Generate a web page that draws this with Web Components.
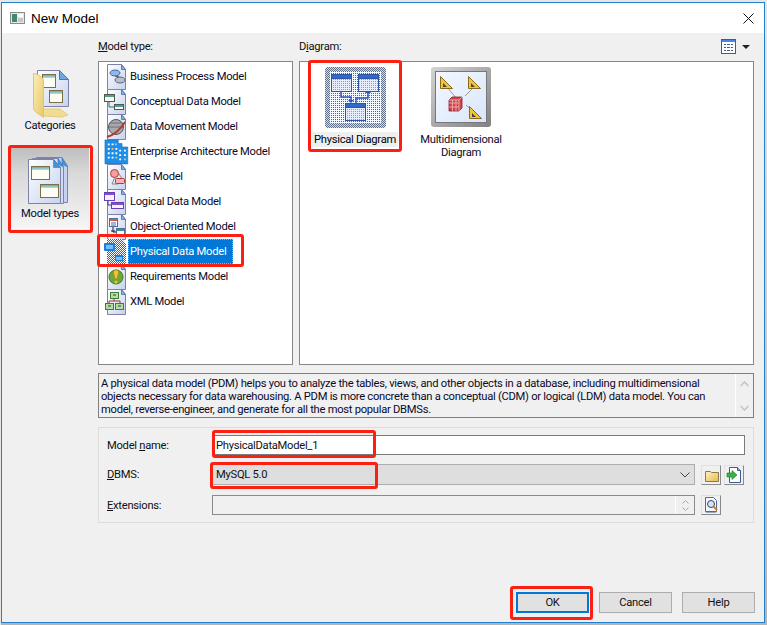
<!DOCTYPE html>
<html>
<head>
<meta charset="utf-8">
<title>New Model</title>
<style>
  html, body { margin: 0; padding: 0; }
  body { width: 767px; height: 625px; overflow: hidden; background: #f0f0f0; font-family: Roboto, "Liberation Sans", Arial, sans-serif; font-size: 11.2px; letter-spacing: -.27px; color: #000; }
  u { text-decoration: underline; }
</style>
</head>
<body>
<nm-dialog heading="New Model">
  <nm-side-pane slot="side">
    <nm-side-item icon="categories">Categories</nm-side-item>
    <nm-side-item icon="types" active>Model types</nm-side-item>
  </nm-side-pane>

  <nm-pane slot="types" style="width:195px"><span slot="label"><u>M</u>odel type:</span>
    <nm-list-row icon="business">Business Process Model</nm-list-row>
    <nm-list-row icon="conceptual">Conceptual Data Model</nm-list-row>
    <nm-list-row icon="movement">Data Movement Model</nm-list-row>
    <nm-list-row icon="enterprise">Enterprise Architecture Model</nm-list-row>
    <nm-list-row icon="free">Free Model</nm-list-row>
    <nm-list-row icon="logical">Logical Data Model</nm-list-row>
    <nm-list-row icon="oo">Object-Oriented Model</nm-list-row>
    <nm-list-row icon="physical" selected>Physical Data Model</nm-list-row>
    <nm-list-row icon="requirements">Requirements Model</nm-list-row>
    <nm-list-row icon="xml">XML Model</nm-list-row>
  </nm-pane>

  <nm-pane slot="diagrams" style="flex:1" tiles><span slot="label">D<u>i</u>agram:</span><nm-view-switch slot="tools"></nm-view-switch>
    <nm-tile icon="phys" selected>Physical Diagram</nm-tile>
    <nm-tile icon="multi">Multidimensional Diagram</nm-tile>
  </nm-pane>

  <nm-description slot="description">A physical data model (PDM) helps you to analyze the tables, views, and other objects in a database, including multidimensional<br>objects necessary for data warehousing. A PDM is more concrete than a conceptual (CDM) or logical (LDM) data model. You can<br>model, reverse-engineer, and generate for all the most popular DBMSs.</nm-description>

  <nm-form slot="form">
    <nm-field><span slot="label">Model <u>n</u>ame:</span><nm-input value="PhysicalDataModel_1"></nm-input></nm-field>
    <nm-field style="height:21px;margin-bottom:1px"><span slot="label"><u>D</u>BMS:</span><nm-input kind="combo" value="MySQL 5.0"></nm-input><nm-tool icon="folder"></nm-tool><nm-tool icon="import" style="margin:0 1px 0 -2px"></nm-tool></nm-field>
    <nm-field><span slot="label"><u>E</u>xtensions:</span><nm-input kind="spin"></nm-input><nm-tool icon="preview" style="margin-right:24px"></nm-tool></nm-field>
  </nm-form>

  <nm-button slot="buttons" default>OK</nm-button>
  <nm-button slot="buttons">Cancel</nm-button>
  <nm-button slot="buttons">Help</nm-button>

  <nm-mark slot="marks" box="8,145,85,88"></nm-mark>
  <nm-mark slot="marks" box="97,234,147,33"></nm-mark>
  <nm-mark slot="marks" box="308,60,94,92"></nm-mark>
  <nm-mark slot="marks" box="212,430,164,28"></nm-mark>
  <nm-mark slot="marks" box="210,462,168,27"></nm-mark>
  <nm-mark slot="marks" box="510,586,83,34"></nm-mark>
</nm-dialog>

<script>
/**
 * Shared page shape used under most of the model icons.
 */
const page = `
  <path d="M4.5 1.5h14l4 5v20h-18z" fill="url(#pg)" stroke="#7f82a8"/>
  <path d="M18.5 1.5v5h4z" fill="#7db4e6" stroke="#5b7fb5"/>`

const defs = `
  <defs>
    <linearGradient id="pg" x1="0" y1="0" x2="1" y2="1"><stop offset="0" stop-color="#fff"/><stop offset="1" stop-color="#c6d2ee"/></linearGradient>
    <linearGradient id="win" x1="0" y1="0" x2="0" y2="1"><stop offset="0" stop-color="#5fb0ac"/><stop offset="1" stop-color="#bfe0dc"/></linearGradient>
    <linearGradient id="fold" x1="0" y1="0" x2="1" y2="1"><stop offset="0" stop-color="#fbeeb6"/><stop offset="1" stop-color="#e8c868"/></linearGradient>
    <pattern id="dot" width="2" height="2" patternUnits="userSpaceOnUse"><rect width="2" height="2" fill="#fff"/><rect width="1" height="1" fill="#0a6fd0"/><rect x="1" y="1" width="1" height="1" fill="#0a6fd0"/></pattern>
    <pattern id="dots" width="2" height="2" patternUnits="userSpaceOnUse"><rect width="2" height="2" fill="#f4f8ff"/><rect width="1" height="1" fill="#3a66b0"/></pattern>
    <pattern id="dotg" width="2" height="2" patternUnits="userSpaceOnUse"><rect width="2" height="2" fill="#d8dde4"/><rect width="1" height="1" fill="#5f7088"/><rect x="1" y="1" width="1" height="1" fill="#5f7088"/></pattern>
    <pattern id="dotb" width="2" height="2" patternUnits="userSpaceOnUse"><rect width="2" height="2" fill="#e8eefc"/><rect width="1" height="1" fill="#7f9ad8"/></pattern>
  </defs>`

const win = (x, y, w, h) => `<rect x="${x + 0.5}" y="${y + 0.5}" width="${w}" height="${h}" fill="#fdfdf4" stroke="#7a6f45"/><rect x="${x + 1}" y="${y + 1}" width="${w - 1}" height="3" fill="url(#win)"/>`

const icons = {
  business: `${page}<ellipse cx="12" cy="10" rx="5" ry="3" fill="#8fb8e8" stroke="#44689c"/><ellipse cx="17" cy="17" rx="5" ry="3" fill="#b8c0d0" stroke="#5a6478"/><path d="M12 13l4 1" stroke="#555"/>`,
  conceptual: `${page}<rect x="1.5" y="6.5" width="10" height="7" fill="#fdfbe8" stroke="#4a5a50"/><rect x="2" y="7" width="9" height="2" fill="#4f9e98"/><rect x="11.5" y="16.5" width="9" height="5" fill="#fdfbe8" stroke="#4a5a50"/><rect x="12" y="17" width="8" height="2" fill="#4f9e98"/><path d="M6 14v5h5" fill="none" stroke="#3c6f6c"/>`,
  movement: `${page}<circle cx="13" cy="14" r="7.5" fill="#a9a9b0" stroke="#55555c"/><path d="M7 10h12M6 14h14" stroke="#6e6e76"/><path d="M4 24c7-2 13-7 18-15" fill="none" stroke="#b23a2e" stroke-width="2"/>`,
  enterprise: `<g transform="translate(1 1) scale(.95 .89)"><path d="M1 1h14v4h4v4h6v19H1z" fill="#1d8fe8" stroke="#1569b5" stroke-width=".6"/><path d="M4 5h2v2H4zm4 0h2v2H8zm4 0h1v2h-1zM4 10h2v2H4zm8 0h2v2h-2zm4 2h2v2h-2zm5 0h2v2h-2zM4 15h2v2H4zm4 0h2v2H8zm4 0h2v2h-2zm4 2h2v2h-2zm5 0h2v2h-2zM4 20h2v2H4zm4 0h2v2H8zm8 2h2v2h-2z" fill="#fff"/><path d="M8 10h2v2H8zm4 10h2v2h-2zm9 2h2v2h-2z" fill="#f5c23c"/></g>`,
  free: `${page}<path d="M12 14l-3 7h6M14 8l6 9" fill="none" stroke="#888"/><circle cx="11.5" cy="10.5" r="4" fill="#f4a0a0" stroke="#b03a3a"/><rect x="12.5" y="15.5" width="9" height="5" rx="1" fill="#f6b4b4" stroke="#b03a3a"/>`,
  logical: `${page}<rect x="1.5" y="4.5" width="10" height="8" fill="#f4f0fc" stroke="#6a3fb5"/><rect x="2" y="5" width="9" height="2" fill="#7d52c8"/><rect x="8.5" y="14.5" width="12" height="6" fill="#f4f0fc" stroke="#6a3fb5"/><rect x="9" y="15" width="11" height="2" fill="#7d52c8"/><path d="M5 13v4h3" fill="none" stroke="#4d2e96"/>`,
  oo: `${page}<rect x="6.5" y="5.5" width="8" height="8" fill="#fff" stroke="#4a6fa0"/><rect x="7" y="6" width="7" height="2" fill="#d8584e"/><path d="M8 10h5M8 12h5" stroke="#4a6fa0"/><rect x="13.5" y="15.5" width="8" height="6" fill="#fff" stroke="#4a6fa0"/><rect x="14" y="16" width="7" height="2" fill="#3f8f8c"/><path d="M10 14v5h3M8 18h4" fill="none" stroke="#222"/>`,
  physical: `<path d="M4 1h15l4 5v20H4z" fill="url(#dot)"/><rect x="1" y="5" width="11" height="8" rx="1" fill="#1a80dc"/><rect x="3" y="7" width="7" height="4" fill="#7dbcf2"/><rect x="12" y="17" width="8" height="6" fill="#1a80dc"/><rect x="13" y="19" width="6" height="3" fill="#7dbcf2"/>`,
  requirements: `${page}<circle cx="13" cy="14" r="7" fill="#6aa83c" stroke="#3b7a2a"/><path d="M13 7c2 0 3 1 2.5 3l-1.5 6h-2l-1.5-6c-.5-2 1-3 2.5-3z" fill="#f4c430" stroke="#a67c10" stroke-width=".6"/><circle cx="13" cy="19" r="1.5" fill="#f4c430"/>`,
  xml: `${page}<rect x="7.5" y="4.5" width="8" height="6" fill="#b4dca4" stroke="#447a3a"/><rect x="2.5" y="15.5" width="8" height="6" fill="#b4dca4" stroke="#447a3a"/><rect x="12.5" y="15.5" width="8" height="6" fill="#b4dca4" stroke="#447a3a"/><path d="M11 11v2M6 15v-2h11v2" fill="none" stroke="#a03030"/><path d="M10 7h3M5 18h3M15 18h3" stroke="#2a4a20"/>`
}

/**
 * Small wrapper that turns a list or tool icon body into an svg.
 *
 * @param {string} body The inner markup.
 * @param {number} w The width in pixels.
 * @param {number} h The height in pixels.
 * @returns {string} The svg markup.
 */
const svg = (body, w, h) => `<svg width="${w}" height="${h}" viewBox="0 0 ${w} ${h}" xmlns="http://www.w3.org/2000/svg" style="display:block">${defs}${body}</svg>`

const bigIcons = {
  categories: svg(`
    <path d="M8 40h20l8 6-6 2-18-1z" fill="#f2dc90" stroke="#e4cc80"/>
    <path d="M5.5 1.5h22l9 9v27h-31z" fill="url(#pg)" stroke="#7f82a8"/>
    <path d="M27.5 1.5v9h9z" fill="#6fa8e0" stroke="#4f78b0"/>
    ${win(10, 5, 13, 13)}${win(17, 21, 13, 12)}
    <path d="M1.5 4.5c3 0 8 3 10 6v38l-7-5c-2-1.5-3-3-3-5z" fill="url(#fold)" stroke="#dcc47a"/>`, 37, 50),
  types: svg(`
    <path d="M8.5 .5h25l6 8v37h-31z" fill="#c6d2ee" stroke="#7f82a8"/>
    <path d="M4.5 1.5h25l6 8v37h-31z" fill="#d2dcf2" stroke="#7f82a8"/>
    <path d="M.5 2.5h25l7 8v36h-32z" fill="url(#pg)" stroke="#7f82a8"/>
    <path d="M25.5 2.5v8h7zM30 1v6l5 3zM34 .5v7l5 2z" fill="#3f94e0" stroke="#3a78b8" stroke-width=".6"/>
    ${win(3, 9, 18, 13)}${win(12, 27, 18, 13)}`, 44, 48),
  phys: svg(`
    <rect width="61" height="61" rx="3" fill="url(#dotg)"/>
    <rect x="5" y="4" width="51" height="52" fill="url(#dots)"/>
    <path d="M16 24v6h10v3M43 25v6H31v5" fill="none" stroke="#2f55c0" stroke-width="1.5"/>
    <path d="M23 33h6l-3 3z" fill="#2f55c0"/><path d="M40 26l3-4 3 4z" fill="#2f55c0"/>
    <g stroke="#2f55a8"><rect x="6.5" y="7.5" width="20" height="17" fill="url(#dotb)"/><rect x="6.5" y="7.5" width="20" height="4" fill="#2f6ac8"/>
    <rect x="33.5" y="7.5" width="20" height="17" fill="url(#dotb)"/><rect x="33.5" y="7.5" width="20" height="4" fill="#2f6ac8"/>
    <rect x="20.5" y="36.5" width="20" height="17" fill="url(#dotb)"/><rect x="20.5" y="36.5" width="20" height="4" fill="#2f6ac8"/></g>`, 61, 61),
  multi: svg(`
    <defs><linearGradient id="fr" x1="0" y1="0" x2="1" y2="1"><stop offset="0" stop-color="#d4d4d4"/><stop offset="1" stop-color="#808080"/></linearGradient>
    <linearGradient id="pn" x1="0" y1="0" x2="1" y2="1"><stop offset="0" stop-color="#f4f8ff"/><stop offset="1" stop-color="#d8e6fa"/></linearGradient></defs>
    <rect width="60" height="60" rx="3" fill="url(#fr)"/>
    <rect x="4.5" y="4.5" width="51" height="51" fill="url(#pn)" stroke="#777"/>
    <path d="M16 20l10 12M43 20l-9 9M35 38l10 9" stroke="#999" fill="none"/>
    <g fill="#f2c53c" stroke="#8a6a1a"><path d="M9.5 9.5l12 12h-12z"/><path d="M37.5 9.5l12 12h-12z"/><path d="M38.5 39.5l12 12h-12z"/></g>
    <path d="M12 16l4 4h-4zM40 16l4 4h-4zM41 46l4 4h-4z" fill="#444"/>
    <path d="M18 33l3-3h10v11l-3 3H18z" fill="#d0444c" stroke="#8a2028" stroke-width=".8"/>
    <path d="M18 36h10M18 40h10M21.5 33v11M25 33v11M28 33l3-3M18 33h10v11" stroke="#f4c8c8" stroke-width=".7" fill="none"/>`, 60, 60),
  folder: svg(`<defs><linearGradient id="fo" x1="0" y1="0" x2="1" y2="1"><stop offset="0" stop-color="#fff2c0"/><stop offset="1" stop-color="#e8b850"/></linearGradient></defs><path d="M3.5 5.5h5l1 1h7v9h-13z" fill="url(#fo)" stroke="#8a7a4a"/>`, 18, 18),
  import: svg(`<path d="M4.5 1.5h8l3 3v12h-11z" fill="#fff" stroke="#3a5a90"/><path d="M12.5 1.5v3h3" fill="#8ab8e8" stroke="#3a5a90"/><path d="M2 7h5V4.5L12 9l-5 4.5V11H2z" fill="#3cb043" stroke="#1f7a28" stroke-width=".6"/>`, 18, 18),
  preview: svg(`<path d="M3.5 1.5h8l3 3v11h-11z" fill="#f4f8ff" stroke="#4a6aa0"/><circle cx="9" cy="8" r="3.5" fill="#d4e4f8" stroke="#445"/><path d="M11.5 10.5l3.5 3.5" stroke="#d88020" stroke-width="2"/><path d="M4 16.5h10" stroke="#9ab"/>`, 18, 18)
}

/**
 * Creates a custom element from a css and html string.
 *
 * @param {string} name The tag name.
 * @param {string} html The shadow root markup.
 * @param {Function} [ready] Called with the element after the shadow root is filled.
 */
const define = (name, html, ready) => {
  const template = document.createElement('template')
  template.innerHTML = html
  customElements.define(name, class extends HTMLElement {
    constructor () {
      super()
      this.attachShadow({ mode: 'open' }).appendChild(template.content.cloneNode(true))
    }

    connectedCallback () {
      if (ready) ready(this, this.shadowRoot)
    }
  })
}

define('nm-dialog', `
  <style>
    :host { display: flex; flex-direction: column; box-sizing: border-box; position: relative; width: 767px; height: 625px; background: #f0f0f0; font: 11.2px Roboto, "Liberation Sans", Arial, sans-serif; letter-spacing: -.27px; }
    .outer { flex: 1; display: flex; flex-direction: column; min-height: 0; border: solid #e6e6e6; border-width: 2px 0 0 1px; background: linear-gradient(#e6e6e6, #b4b4b4); }
    .frame { display: flex; flex-direction: column; flex: 1; margin: 0 2px 2px 0; border: 1px solid #1f80d0; min-height: 0; background: #f0f0f0; }
    header { display: flex; align-items: center; height: 30px; flex: none; background: #fff; }
    .tico { margin: 0 6px 0 8px; }
    h1 { margin: 0; font: 400 13.5px "Liberation Sans", Arial, sans-serif; letter-spacing: 0; flex: 1; }
    .close { margin-right: 10px; }
    main { display: flex; flex: 1; padding: 0 10px 0 4px; min-height: 0; }
    .side { width: 92px; flex: none; padding-top: 32px; }
    .right { flex: 1; display: flex; flex-direction: column; min-width: 0; }
    .lists { display: flex; gap: 6px; height: 332px; flex: none; }
    .desc { margin-top: 8px; }
    .form { margin-top: 9px; }
    footer { display: flex; justify-content: flex-end; gap: 10px; margin: 69px -1px 0 0; }
  </style>
  <div class="outer">
    <div class="frame">
      <header>
        <svg class="tico" width="15" height="12" viewBox="0 0 15 12"><rect x=".5" y=".5" width="14" height="11" fill="#e8e8e8" stroke="#8a8a8a"/><rect x="2" y="2" width="5" height="8" fill="#3f8a70"/><rect x="8" y="2" width="5" height="3" fill="#fff"/><rect x="8" y="6" width="5" height="4" fill="#c8c8c8"/></svg>
        <h1 id="t"></h1>
        <svg class="close" width="11" height="11" viewBox="0 0 11 11"><path d="M.5.5l10 10M10.5.5l-10 10" stroke="#111" fill="none"/></svg>
      </header>
      <main>
        <div class="side"><slot name="side"></slot></div>
        <div class="right">
          <div class="lists"><slot name="types"></slot><slot name="diagrams"></slot></div>
          <div class="desc"><slot name="description"></slot></div>
          <div class="form"><slot name="form"></slot></div>
          <footer><slot name="buttons"></slot></footer>
        </div>
      </main>
    </div>
  </div>
  <slot name="marks"></slot>
`, (el, root) => { root.getElementById('t').textContent = el.getAttribute('heading') })

define('nm-side-pane', `
  <style>:host { display: flex; flex-direction: column; gap: 12px; align-items: stretch; }</style>
  <slot></slot>
`)

define('nm-side-item', `
  <style>
    :host { display: flex; flex-direction: column; align-items: center; height: 70px; box-sizing: border-box; padding-top: 4px; width: 80px; margin-left: 4px; }
    :host([active]) { height: 82px; padding-top: 9px; background: linear-gradient(#bdbdbd, #d8d8d8 30%, #f5f5f5); border: 1px solid #f8f8f8; border-top-color: #6a6a6a; border-left-color: #6a6a6a; }
    span { margin-top: 0; color: #0a0a2a; }
    :host([active]) span { margin-top: 2px; }
  </style>
  <div id="i"></div><span><slot></slot></span>
`, (el, root) => { root.getElementById('i').innerHTML = bigIcons[el.getAttribute('icon')] })

define('nm-pane', `
  <style>
    :host { display: flex; flex-direction: column; box-sizing: border-box; flex: none; min-width: 0; }
    .head { display: flex; justify-content: space-between; align-items: center; height: 28px; padding-bottom: 1px; box-sizing: border-box; color: #111; }
    .box { flex: 1; border: 1px solid #868686; background: #fff; padding-top: 2px; box-sizing: border-box; }
    :host([tiles]) .box { display: flex; align-items: flex-start; padding: 0 0 0 2px; }
  </style>
  <div class="head"><slot name="label"></slot><slot name="tools"></slot></div>
  <div class="box"><slot></slot></div>
`)

define('nm-list-row', `
  <style>
    :host { display: flex; align-items: center; height: 25px; padding-left: 4px; color: #0a0a2a; }
    span { padding: 0 2px; height: 25px; line-height: 25px; box-sizing: border-box; white-space: nowrap; margin-left: -1px; }
    :host([selected]) span { padding-right: 7px; background: #0078d7; color: #fff; outline: 1px dotted #e8a040; outline-offset: -1px; }
    #i { width: 26px; height: 28px; flex: none; }
  </style>
  <div id="i"></div><span><slot></slot></span>
`, (el, root) => { root.getElementById('i').innerHTML = svg(icons[el.getAttribute('icon')], 26, 28) })

define('nm-tile', `
  <style>
    :host { display: flex; flex-direction: column; align-items: center; width: 106px; padding-top: 5px; color: #0a0a2a; text-align: center; line-height: 13px; }
    #i { height: 61px; }
    span { margin-top: 4px; padding: 1px 2px; max-width: 84px; }
    :host([selected]) span { background: #efefef; color: #000; max-width: none; white-space: nowrap; }
  </style>
  <div id="i"></div><span><slot></slot></span>
`, (el, root) => { root.getElementById('i').innerHTML = bigIcons[el.getAttribute('icon')] })

define('nm-view-switch', `
  <style>:host { display: flex; align-items: center; gap: 6px; padding-right: 5px; margin-right: -1px; }</style>
  <svg width="15" height="15" viewBox="0 0 15 15"><rect x=".5" y=".5" width="14" height="14" fill="#fff" stroke="#3a5f94"/><rect x="1" y="1" width="13" height="2" fill="#4a86e0"/><path d="M3 5h2v1H3zm3 0h3v1H6zm4 0h2v1h-2zM3 8h2v1H3zm3 0h3v1H6zm4 0h2v1h-2zM3 11h2v1H3zm3 0h3v1H6zm4 0h2v1h-2z" fill="#3a5f94"/></svg>
  <svg width="8" height="4" viewBox="0 0 8 4"><path d="M0 0h8L4 4z" fill="#222"/></svg>
`)

define('nm-description', `
  <style>
    :host { display: flex; height: 45px; box-sizing: border-box; border: 1px solid #7f7f7f; background: #f0f0f0; }
    .t { flex: 1; padding: 3px 0 0 2px; line-height: 13px; color: #0a0a2a; white-space: nowrap; overflow: hidden; }
    .s { width: 18px; flex: none; border-left: 1px solid #fff; display: flex; flex-direction: column; justify-content: space-between; align-items: center; padding: 7px 0 6px; box-sizing: border-box; }
  </style>
  <div class="t"><slot></slot></div>
  <div class="s">
    <svg width="9" height="6" viewBox="0 0 9 6"><path d="M.5 5L4.5 1l4 4" fill="none" stroke="#c4c4c4" stroke-width="1.5"/></svg>
    <svg width="9" height="6" viewBox="0 0 9 6"><path d="M.5 1l4 4 4-4" fill="none" stroke="#c4c4c4" stroke-width="1.5"/></svg>
  </div>
`)

define('nm-form', `
  <style>:host { display: flex; flex-direction: column; gap: 9px; box-sizing: border-box; height: 96px; border: 1px solid #dcdcdc; padding: 7px 8px 0 8px; }</style>
  <slot></slot>
`)

define('nm-field', `
  <style>
    :host { display: flex; align-items: center; gap: 5px; height: 20px; color: #111; }
    .l { width: 100px; flex: none; }
  </style>
  <div class="l"><slot name="label"></slot></div><slot></slot>
`)

define('nm-input', `
  <style>
    :host { display: flex; flex: 1; align-items: center; box-sizing: border-box; height: 20px; border: 1px solid #7a7a7a; background: #fff; padding-left: 3px; color: #111; }
    :host([kind=combo]) { height: 21px; background: #dedede; border-color: #adadad; margin-right: 1px; }
    :host([kind=spin]) { background: #f0f0f0; border-color: #8a8a8a; margin-right: 1px; }
    span { flex: 1; }
    .c, .sp { display: none; }
    :host([kind=combo]) .c { display: block; margin-right: 4px; }
    :host([kind=spin]) .sp { display: flex; flex-direction: column; justify-content: center; gap: 3px; align-items: center; width: 18px; height: 100%; border-left: 1px solid #fff; }
  </style>
  <span id="v"></span>
  <svg class="c" width="10" height="6" viewBox="0 0 10 6"><path d="M.5.5L5 5 9.5.5" fill="none" stroke="#444"/></svg>
  <div class="sp">
    <svg width="7" height="4" viewBox="0 0 7 4"><path d="M.5 3.5l3-3 3 3" fill="none" stroke="#aaa"/></svg>
    <svg width="7" height="4" viewBox="0 0 7 4"><path d="M.5.5l3 3 3-3" fill="none" stroke="#aaa"/></svg>
  </div>
`, (el, root) => { root.getElementById('v').textContent = el.getAttribute('value') || '' })

define('nm-tool', `
  <style>:host { display: block; box-sizing: border-box; width: 20px; height: 20px; border: 1px solid; border-color: #e0e0e0 #8a8a8a #8a8a8a #e0e0e0; background: #f0f0f0; flex: none; }</style>
  <div id="i"></div>
`, (el, root) => { root.getElementById('i').innerHTML = bigIcons[el.getAttribute('icon')] })

define('nm-button', `
  <style>
    :host { display: flex; align-items: center; justify-content: center; box-sizing: border-box; width: 73px; height: 21px; background: #e1e1e1; border: 1px solid #adadad; color: #111; }
    :host([default]) { border: 2px solid #0078d7; }
  </style>
  <slot></slot>
`)

define('nm-mark', `
  <style>:host { display: block; position: absolute; box-sizing: border-box; border: 3px solid #fb2012; border-radius: 3px; pointer-events: none; }</style>
`, el => {
  const [x, y, w, h] = el.getAttribute('box').split(',')
  el.style.cssText = `left:${x}px;top:${y}px;width:${w}px;height:${h}px`
})
</script>
</body>
</html>
